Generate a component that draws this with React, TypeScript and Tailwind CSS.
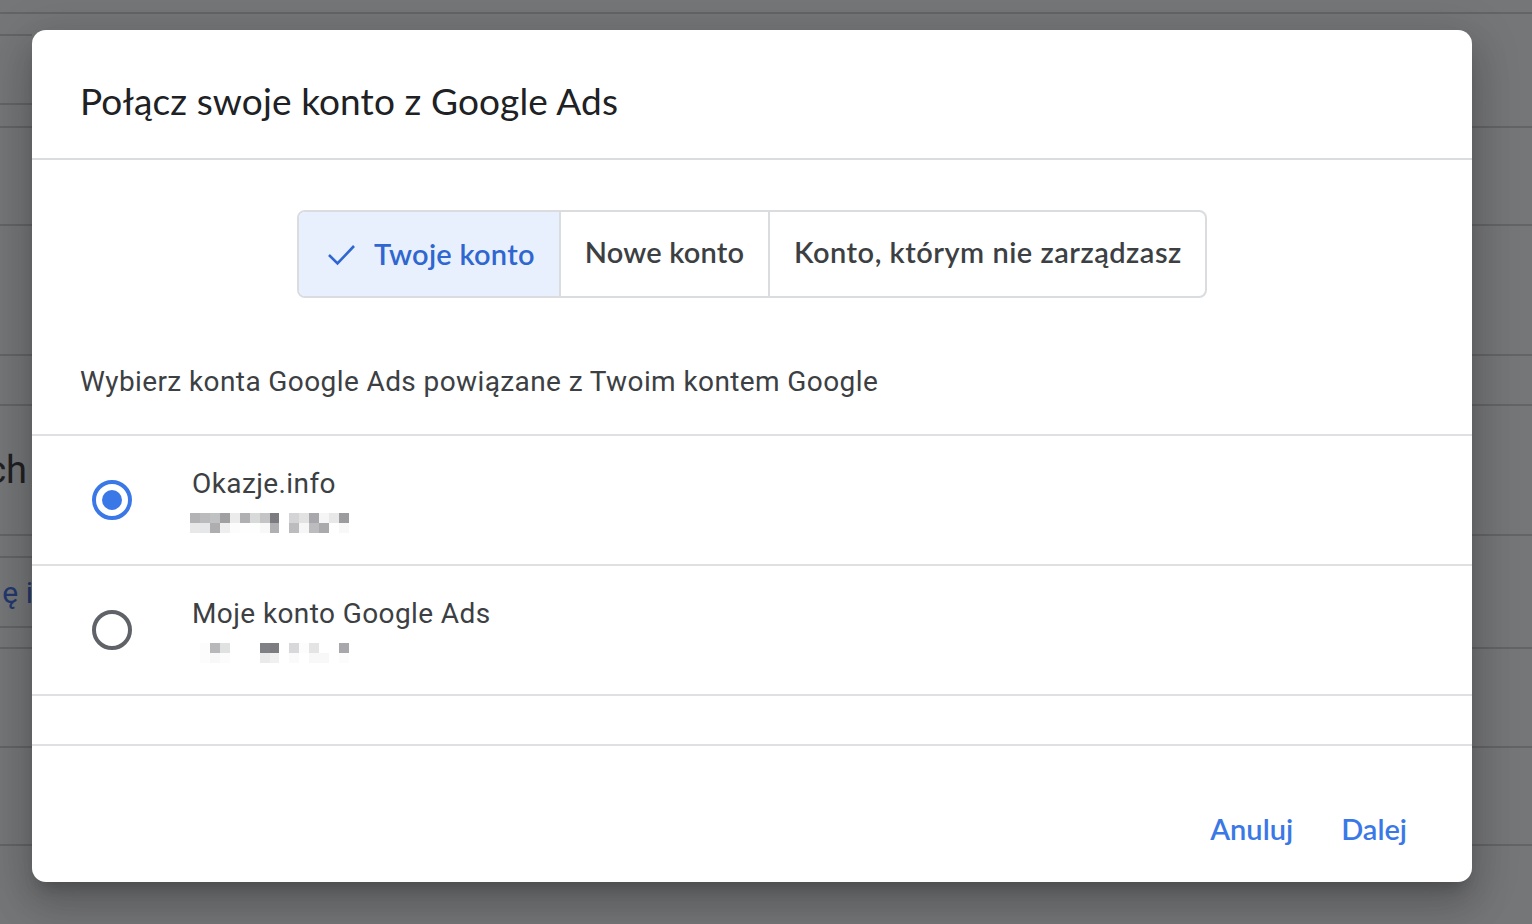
import React from "react";

const titleFont = "font-['Lato','Noto_Sans',sans-serif]";

// y of the row lines in the page behind the dialog, measured below the top bar
const leftLines = [36, 105, 128, 226, 356, 406, 536, 558, 628, 649, 748, 846];
const rightLines = [128, 226, 356, 406, 536, 649, 748, 846];

const blur1 = [
  ["#b3b3b5", "#bbbbbd", "#c0c1c2", "#a0a0a3", "#ebebeb", "#b0b0b3", "#d8d9d9", "#c4c4c6", "#7b7b80", "#ffffff", "#d4d4d6", "#e2e2e3", "#a8a8ac", "#f5f5f5", "#e8e8e9", "#9c9c9f"],
  ["#e8e8e9", "#e6e7e8", "#aeaeb1", "#eeeeef", "#fcfcfc", "#fefefe", "#fefefe", "#f8f8f8", "#b0b0b3", "#ffffff", "#bcbcbe", "#f6f6f6", "#bcbcbf", "#aaaaad", "#ffffff", "#f8f8f8"],
];

const blur2 = [
  ["#ffffff", "#fcfcfc", "#b8b8ba", "#e0e1e1", "#ffffff", "#ffffff", "#ffffff", "#808186", "#7c7c81", "#ffffff", "#d8d8da", "#fcfcfc", "#e4e4e5", "#ffffff", "#ffffff", "#a8a8ac"],
  ["#ffffff", "#fcfcfc", "#f8f8f8", "#fcfcfc", "#ffffff", "#ffffff", "#ffffff", "#eaeaeb", "#f0f0f1", "#ffffff", "#fafafa", "#ffffff", "#f8f8f8", "#f8f8f8", "#ffffff", "#fcfcfc"],
];

// pixelated account id
const Blurred = ({ rows }: { rows: string[][] }) => (
  <svg width="159" height="20" viewBox="0 0 160 20" preserveAspectRatio="none" shapeRendering="crispEdges" className="block -ml-0.5">
    {rows.map((row, y) =>
      row.map((c, x) => <rect key={x + "-" + y} x={x * 10} y={y * 10} width="10" height="10" fill={c} />)
    )}
  </svg>
);

const BackColumn = ({ lines, className, labels }: { lines: number[]; className: string; labels?: Record<number, React.ReactNode> }) => (
  <div className={className}>
    {lines.map((y, i) => (
      <div
        key={y}
        className="flex items-center justify-end whitespace-nowrap border-b-2 border-[#636466]"
        style={{ height: y - (i ? lines[i - 1] : 14) }}
      >
        {labels?.[y]}
      </div>
    ))}
  </div>
);

const AccountRow = ({ name, rows, checked }: { name: string; rows: string[][]; checked?: boolean }) => (
  <div className="flex h-[130px] items-center border-b-2 border-[#e0e0e3] pl-[60px]">
    {checked ? (
      <div className="flex h-10 w-10 items-center justify-center rounded-full border-4 border-[#3b78e7]">
        <div className="h-5 w-5 rounded-full bg-[#3b78e7]" />
      </div>
    ) : (
      <div className="h-10 w-10 rounded-full border-4 border-[#5f6368]" />
    )}
    <div className="ml-[60px] pb-0.5">
      <div className="text-[28px] leading-9 tracking-[0.4px] text-[#3c4043]">{name}</div>
      <div className="mt-[11px]">
        <Blurred rows={rows} />
      </div>
    </div>
  </div>
);

export default function App() {
  return (
    <div className="relative h-[924px] w-[1532px] overflow-hidden bg-[#757678] font-['Roboto',sans-serif]">
      {/* page behind the scrim */}
      <div className="h-3.5 border-b-2 border-[#636466]" />
      <div className="flex justify-between">
        <BackColumn
          lines={leftLines}
          className="w-8"
          labels={{
            536: <span className="pr-[5px] text-[38px] text-[#1f2022]">ch</span>,
            628: <span className="-mr-[1px] text-[30px] text-[#24386e]">ę i</span>,
          }}
        />
        <BackColumn lines={rightLines} className="w-[60px]" />
      </div>

      {/* dialog */}
      <div className="absolute left-8 top-[30px] flex h-[852px] w-[1440px] flex-col rounded-[14px] bg-white shadow-[0_24px_38px_3px_rgba(0,0,0,0.14),0_9px_46px_8px_rgba(0,0,0,0.12),0_11px_15px_-7px_rgba(0,0,0,0.2)]">
        <div className="flex h-[130px] shrink-0 items-center border-b-2 border-[#dadce0] pl-12 pt-3">
          <h1 className={`${titleFont} text-[37px] font-normal leading-none tracking-[0.12px] text-[#202124]`}>Połącz swoje konto z Google Ads</h1>
        </div>

        <div className="flex justify-center pt-[50px]">
          <div className={`${titleFont} flex h-[88px] w-[910px] overflow-hidden rounded-lg border-2 border-[#dadce0] text-[29px] font-semibold`}>
            <div className="flex w-[262px] items-center border-r-2 border-[#dadce0] bg-[#e8f0fe] pl-[28px] tracking-[0.25px] text-[#2f66d0]">
              <svg width="30" height="30" viewBox="0 0 30 30" fill="none" stroke="currentColor" strokeWidth="2.6" className="mr-[17px]">
                <path d="M2 16l8.5 8.5L27 7" />
              </svg>
              Twoje konto
            </div>
            <div className="flex w-[209px] items-center justify-center border-r-2 border-[#dadce0] pb-1 tracking-[0.2px] text-[#3c4043]">Nowe konto</div>
            <div className="flex flex-1 items-center pb-1 pl-6 tracking-[0.5px] text-[#3c4043]">Konto, którym nie zarządzasz</div>
          </div>
        </div>

        <div className="flex h-[138px] items-center border-b-2 border-[#e0e0e3] pl-12 pt-[32px] text-[28px] tracking-[0.4px] text-[#3c4043]">
          Wybierz konta Google Ads powiązane z Twoim kontem Google
        </div>

        <AccountRow name="Okazje.info" rows={blur1} checked />
        <AccountRow name="Moje konto Google Ads" rows={blur2} />
        <div className="h-[50px] border-b-2 border-[#e0e0e3]" />

        <div className={`${titleFont} flex flex-1 items-end justify-end gap-12 pb-[32px] pr-[65px] text-[29px] font-semibold text-[#3b78e7]`}>
          <span>Anuluj</span>
          <span>Dalej</span>
        </div>
      </div>
    </div>
  );
}
